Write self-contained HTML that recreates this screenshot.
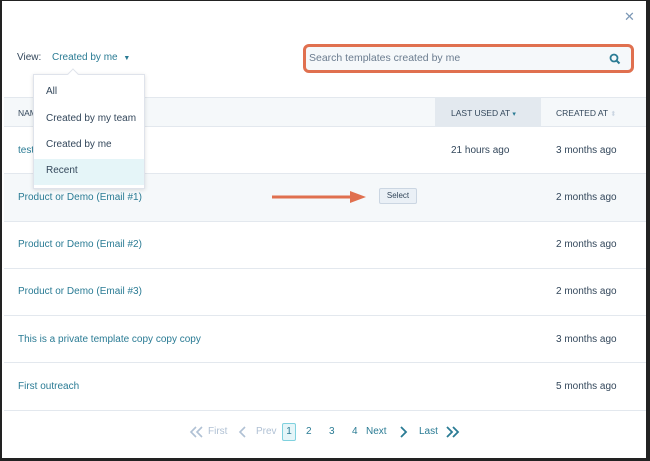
<!DOCTYPE html>
<html><head><style>
*{margin:0;padding:0;box-sizing:border-box}
body{width:650px;height:461px;background:#222;font-family:"Liberation Sans",sans-serif;overflow:hidden;position:relative}
#w{position:absolute;left:2px;top:1px;width:644px;height:457px;background:#fff;overflow:hidden}
.a{position:absolute;white-space:nowrap}
.l{color:#2a7b94;font-size:10px}
.t{color:#33475b;font-size:10px}
.row{position:absolute;left:2px;width:642px;border-bottom:1px solid #e3e8ee}
.p{position:absolute;top:425px;font-size:10px;color:#2a7b94;white-space:nowrap}
.g{color:#b0c1d4}
</style></head><body><div id="w">
<div class="a" style="left:622px;top:8px;color:#7c98b6;font-size:13px">✕</div>
<div class="a t" style="left:15px;top:51px">View:</div>
<div class="a l" style="left:50px;top:51px">Created by me <span style="font-size:7px;margin-left:3px">▼</span></div>
<div class="a" style="left:301px;top:43px;width:331px;height:29px;border:3px solid #e0704f;border-radius:6px;background:#f5f8fa"></div>
<div class="a" style="left:307px;top:51px;font-size:10.5px;color:#6b7c8f">Search templates created by me</div>
<svg class="a" style="left:607px;top:52px" width="12" height="12"><circle cx="5" cy="5" r="3.5" stroke="#2a7b94" stroke-width="1.8" fill="none"/><line x1="7.5" y1="7.5" x2="10.5" y2="10.5" stroke="#2a7b94" stroke-width="2"/></svg>
<div class="row" style="top:96px;height:30px;background:#f5f8fa;border-top:1px solid #e3e8ee"></div>
<div class="a" style="left:433px;top:96px;width:106px;height:30px;background:#e3e9ef"></div>
<div class="a t" style="left:16px;top:107px;font-size:8.5px">NAME</div>
<div class="a t" style="left:449px;top:107px;font-size:8.5px">LAST USED AT <span style="color:#2a7b94;font-size:7px">▾</span></div>
<div class="a t" style="left:554px;top:107px;font-size:8.5px">CREATED AT <span style="color:#cbd6e2;font-size:7px">⬍</span></div>
<div class="row" style="top:126px;height:47px"></div>
<div class="row" style="top:173px;height:48px;background:#f5f8fa"></div>
<div class="row" style="top:221px;height:47px"></div>
<div class="row" style="top:268px;height:47px"></div>
<div class="row" style="top:315px;height:47px"></div>
<div class="row" style="top:362px;height:48px"></div>
<div class="a l" style="left:16px;top:144px">test</div>
<div class="a t" style="left:449px;top:144px">21 hours ago</div>
<div class="a t" style="left:554px;top:144px">3 months ago</div>
<div class="a l" style="left:16px;top:191px">Product or Demo (Email #1)</div>
<svg class="a" style="left:268px;top:188px" width="100" height="16"><line x1="2" y1="8" x2="86" y2="8" stroke="#e0704f" stroke-width="3"/><polygon points="80,2 96,8 80,14" fill="#e0704f"/></svg>
<div class="a" style="left:377px;top:187px;width:38px;height:16px;border:1px solid #cbd6e2;background:#eaf0f6;border-radius:2px;font-size:8px;color:#33475b;text-align:center;line-height:14px">Select</div>
<div class="a t" style="left:554px;top:191px">2 months ago</div>
<div class="a l" style="left:16px;top:238px">Product or Demo (Email #2)</div>
<div class="a t" style="left:554px;top:238px">2 months ago</div>
<div class="a l" style="left:16px;top:285px">Product or Demo (Email #3)</div>
<div class="a t" style="left:554px;top:285px">2 months ago</div>
<div class="a l" style="left:16px;top:333px">This is a private template copy copy copy</div>
<div class="a t" style="left:554px;top:333px">3 months ago</div>
<div class="a l" style="left:16px;top:380px">First outreach</div>
<div class="a t" style="left:554px;top:380px">5 months ago</div>
<div class="a" style="left:31px;top:73px;width:112px;height:115px;background:#fff;border:1px solid #dfe3eb;box-shadow:0 1px 4px rgba(0,0,0,.12)"></div>
<div class="a" style="left:67px;top:69px;width:8px;height:8px;background:#fff;border-left:1px solid #dfe3eb;border-top:1px solid #dfe3eb;transform:rotate(45deg)"></div>
<div class="a" style="left:32px;top:158px;width:110px;height:26px;background:#e5f5f8"></div>
<div class="a t" style="left:44px;top:85px">All</div>
<div class="a t" style="left:44px;top:112px">Created by my team</div>
<div class="a t" style="left:44px;top:138px">Created by me</div>
<div class="a t" style="left:44px;top:164px">Recent</div>
<svg class="a" style="left:186px;top:424px" width="20" height="14"><path d="M8 2 L3 7 L8 12 M14 2 L9 7 L14 12" stroke="#b0c1d4" stroke-width="1.6" fill="none"/></svg>
<div class="p g" style="left:206px">First</div>
<svg class="a" style="left:236px;top:424px" width="10" height="14"><path d="M7 2 L2 7 L7 12" stroke="#b0c1d4" stroke-width="1.6" fill="none"/></svg>
<div class="p g" style="left:254px">Prev</div>
<div class="a" style="left:280px;top:422px;width:14px;height:18px;border:1px solid #7fd1de;background:#e5f5f8;border-radius:2px;font-size:10px;color:#2a7b94;text-align:center;line-height:16px">1</div>
<div class="p" style="left:304px">2</div>
<div class="p" style="left:327px">3</div>
<div class="p" style="left:350px">4</div>
<div class="p" style="left:364px">Next</div>
<svg class="a" style="left:396px;top:424px" width="10" height="14"><path d="M3 2 L8 7 L3 12" stroke="#2a7b94" stroke-width="1.8" fill="none"/></svg>
<div class="p" style="left:417px">Last</div>
<svg class="a" style="left:442px;top:424px" width="18" height="14"><path d="M3 2 L8 7 L3 12 M9 2 L14 7 L9 12" stroke="#2a7b94" stroke-width="1.8" fill="none"/></svg>
</div></body></html>
